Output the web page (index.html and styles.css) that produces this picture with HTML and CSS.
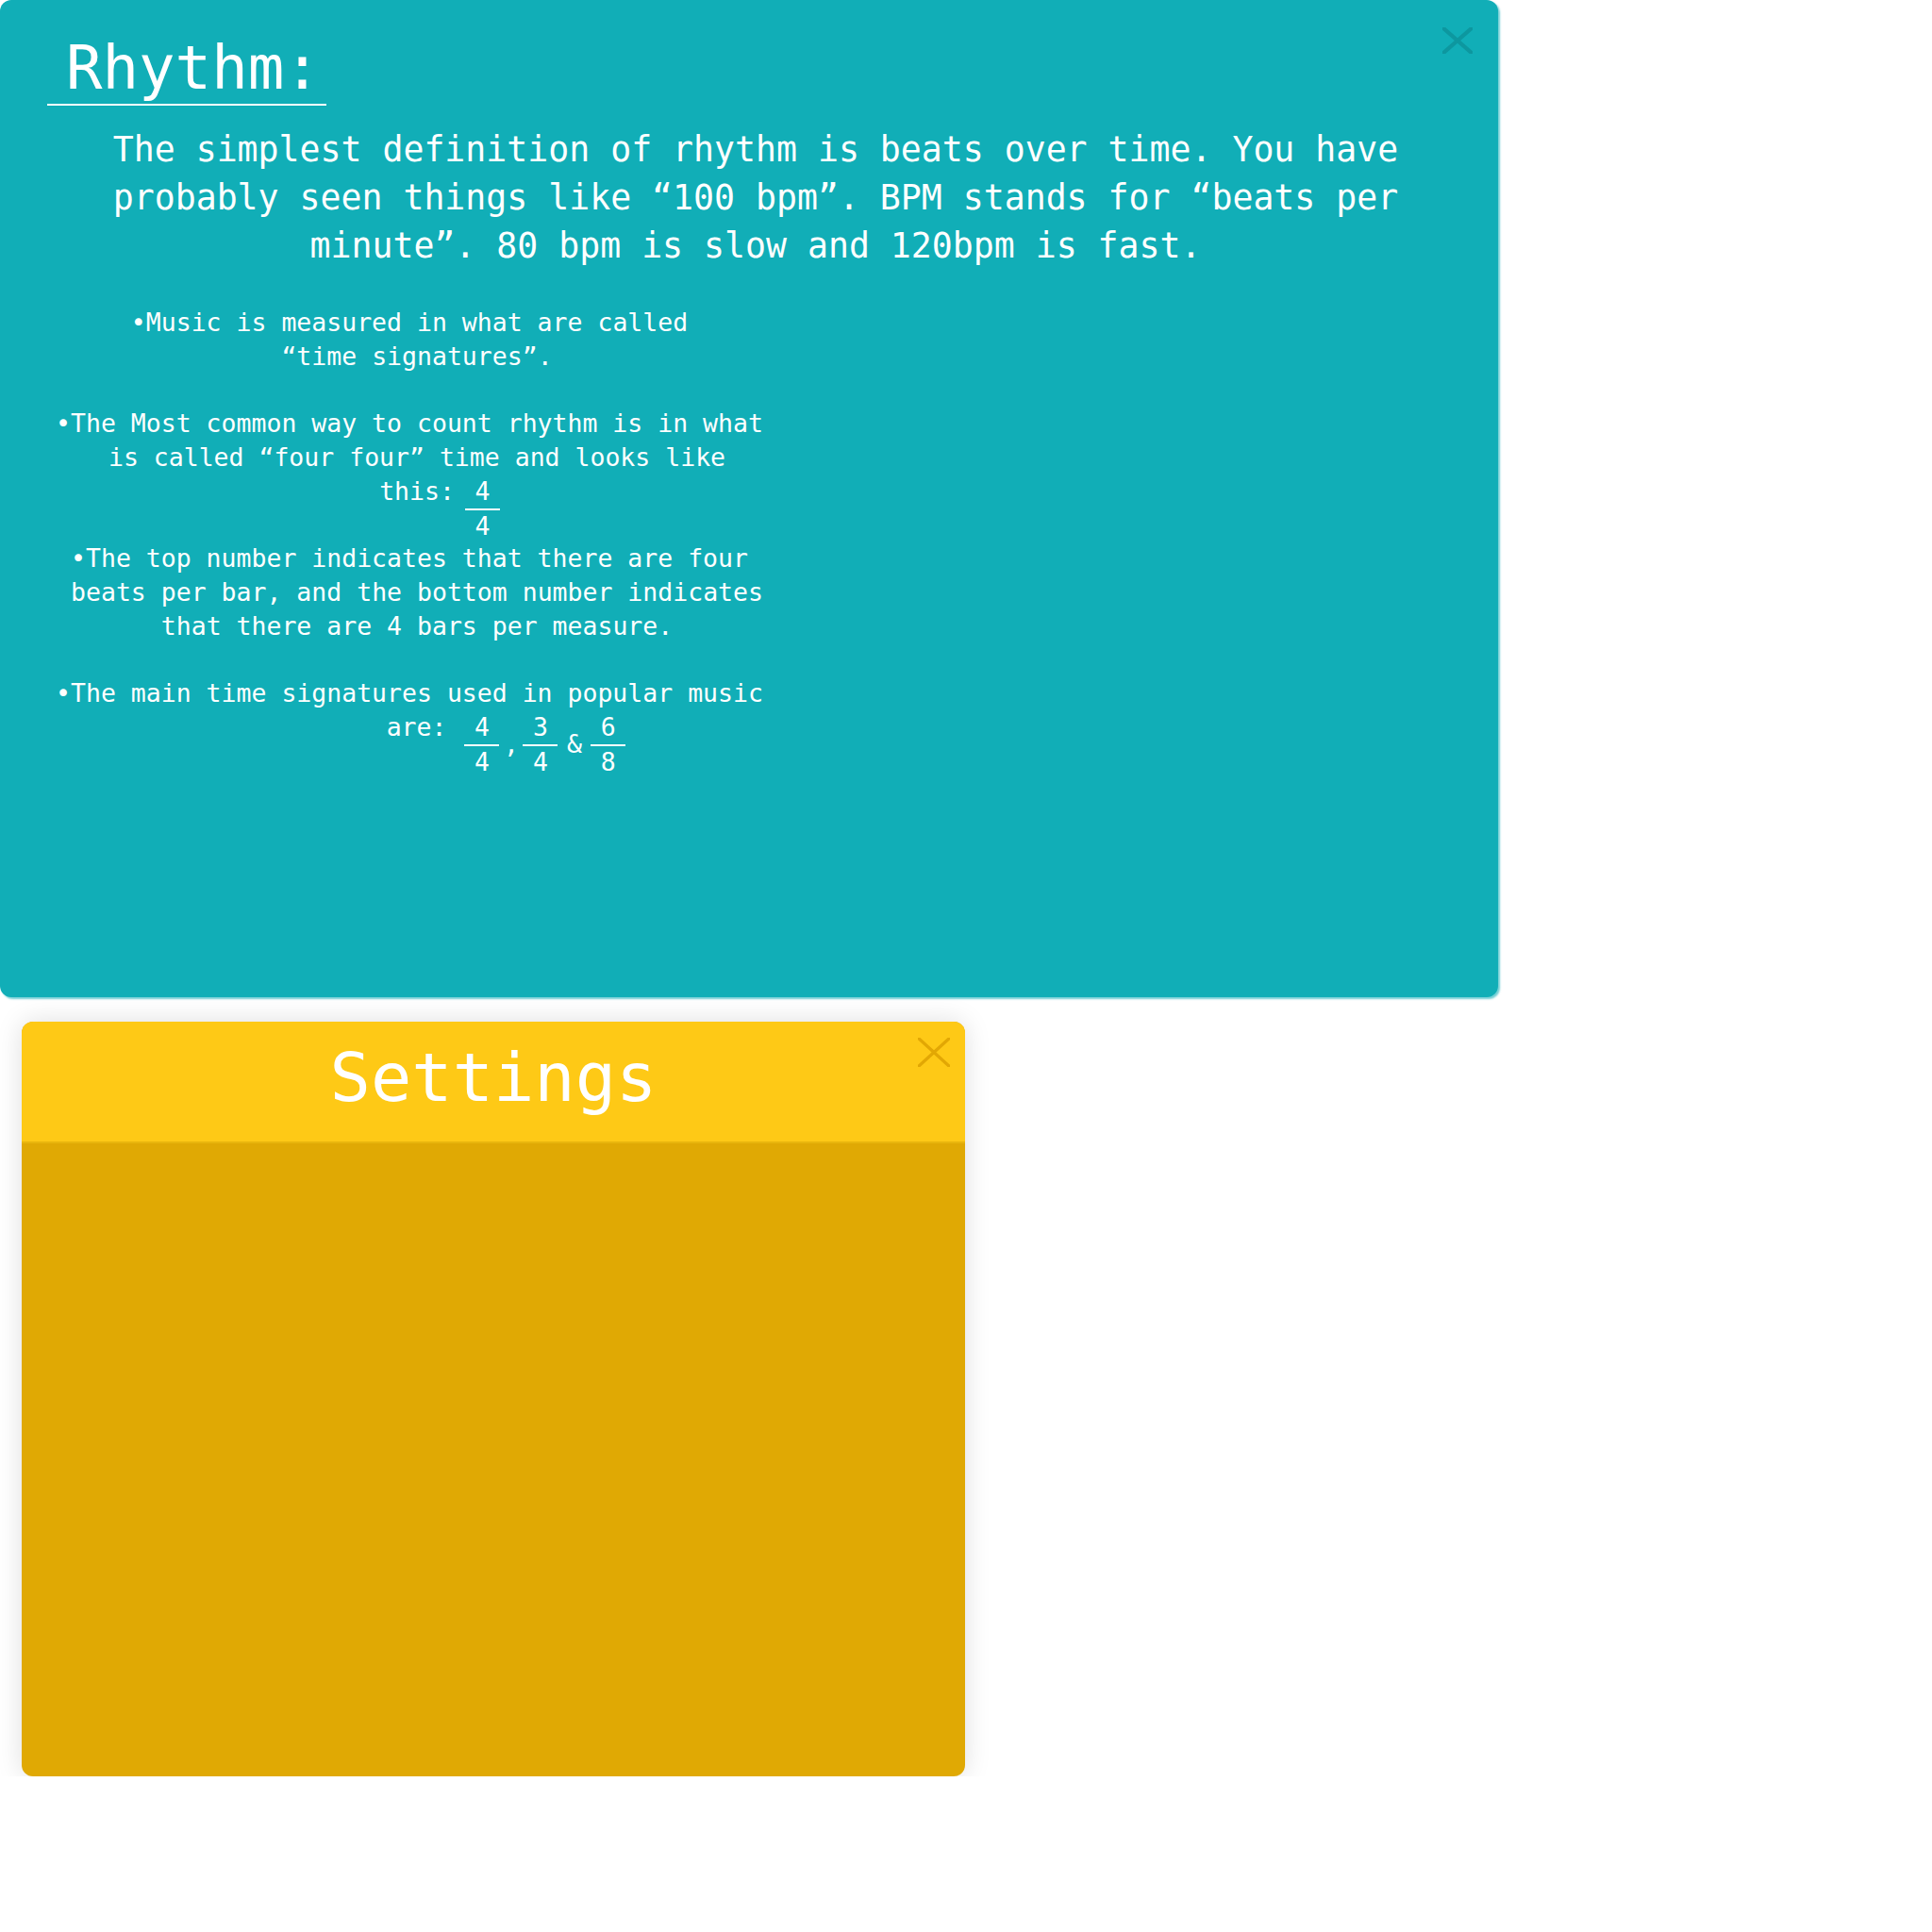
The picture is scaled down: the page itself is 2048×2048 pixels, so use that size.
FILE: index.html
```html
<!DOCTYPE html>
<html lang="en">
<head>
<meta charset="utf-8">
<title>Rhythm</title>
<link rel="stylesheet" href="styles.css">
</head>
<body>
  <section class="lesson">
    <button class="close close-lesson" aria-label="Close">
      <svg viewBox="0 0 32 28" width="32" height="28"><path d="M-2 -1.75 L34 29.75 M34 -1.75 L-2 29.75"/></svg>
    </button>
    <h1 class="lesson-title">Rhythm:</h1>
    <p class="lesson-intro">The simplest definition of rhythm is beats over time. You have probably seen things like “100 bpm”. BPM stands for “beats per minute”. 80 bpm is slow and 120bpm is fast.</p>
    <div class="notes">
      <p class="note note-gap">•Music is measured in what are called<br>“time signatures”.</p>
      <p class="note">•The Most common way to count rhythm is in what is called “four four” time and looks like <span class="sig-line">this:<span class="sigs sigs-single"><span class="frac"><span class="frac-top">4</span><span class="frac-bottom">4</span></span></span></span></p>
      <p class="note note-gap">•The top number indicates that there are four beats per bar, and the bottom number indicates that there are 4 bars per measure.</p>
      <p class="note">•The main time signatures used in popular music <span class="sig-line">are:<span class="sigs sigs-group"><span class="frac"><span class="frac-top">4</span><span class="frac-bottom">4</span></span><span class="sep">,</span><span class="frac"><span class="frac-top">3</span><span class="frac-bottom">4</span></span><span class="sep amp">&amp;</span><span class="frac"><span class="frac-top">6</span><span class="frac-bottom">8</span></span></span></span></p>
    </div>
  </section>

  <section class="settings">
    <header class="settings-head">
      <h2 class="settings-title">Settings</h2>
      <button class="close close-settings" aria-label="Close">
        <svg viewBox="0 0 34 31" width="34" height="31"><path d="M-2 -1.8 L36 32.8 M36 -1.8 L-2 32.8"/></svg>
      </button>
    </header>
    <div class="settings-body"></div>
  </section>
</body>
</html>
```
FILE: styles.css
```css
* {
  box-sizing: border-box;
}

body {
  margin: 0;
  background: #ffffff;
  font-family: "DejaVu Sans Mono", "Liberation Mono", monospace;
  color: #ffffff;
}

.lesson {
  position: relative;
  width: 1588px;
  height: 1057px;
  padding-top: 35px;
  background: #11aeb7;
  border-radius: 12px;
  box-shadow: 2px 2px 2px rgba(17, 174, 183, 0.6);
}

.close {
  position: absolute;
  margin: 0;
  padding: 0;
  border: 0;
  background: none;
  line-height: 0;
}

.close svg {
  display: block;
  overflow: hidden;
  fill: none;
}

.close-lesson {
  top: 29px;
  left: 1529px;
}

.close-lesson svg path {
  stroke: #0d979f;
  stroke-width: 4.2;
}

.lesson-title {
  width: fit-content;
  margin: 0 0 0 50px;
  padding: 0 6px 1px 20px;
  font-size: 64px;
  font-weight: normal;
  line-height: normal;
  border-bottom: 2px solid #ffffff;
}

.lesson-intro {
  margin: 21px 99px 0 113px;
  font-size: 36.5px;
  line-height: 51px;
  text-align: center;
}

.notes {
  width: 744px;
  margin: 38px 0 0 70px;
  font-size: 26.5px;
  line-height: 35.75px;
  text-align: center;
}

.note {
  margin: 0;
  text-indent: -16px;
}

.note-gap {
  margin-bottom: 35.75px;
}

.sig-line {
  white-space: nowrap;
}

.sigs {
  display: inline-flex;
  align-items: center;
  gap: 4.5px;
  vertical-align: baseline;
  text-indent: 0;
}

/* the signatures hang past the centred text, so they add no width to the line */
.sigs-single {
  margin: 0 -48px 0 11px;
}

.sigs-group {
  margin: 0 -189px 0 19px;
}

.frac {
  display: flex;
  flex-direction: column;
  line-height: 31px;
  text-align: center;
}

.frac-top {
  padding: 2.4px 10.5px;
  border-bottom: 2px solid #ffffff;
}

.frac-bottom {
  padding: 1.35px 0;
}

.sep.amp {
  margin: 0 5px;
}

.settings {
  position: relative;
  width: 1000px;
  height: 800px;
  margin: 26px 0 0 23px;
  background: #e0a904;
  border-radius: 12px;
  overflow: hidden;
  box-shadow: 0 0 28px rgba(0, 0, 0, 0.13);
}

.settings-head {
  height: 129px;
  padding-top: 17px;
  background: #fec916;
  border-bottom: 2px solid #e9b50d;
  text-align: center;
}

.settings-title {
  margin: 0;
  font-size: 72px;
  font-weight: normal;
  line-height: normal;
}

.close-settings {
  top: 17px;
  left: 950px;
}

.close-settings svg path {
  stroke: #e2a704;
  stroke-width: 3.3;
}
```
